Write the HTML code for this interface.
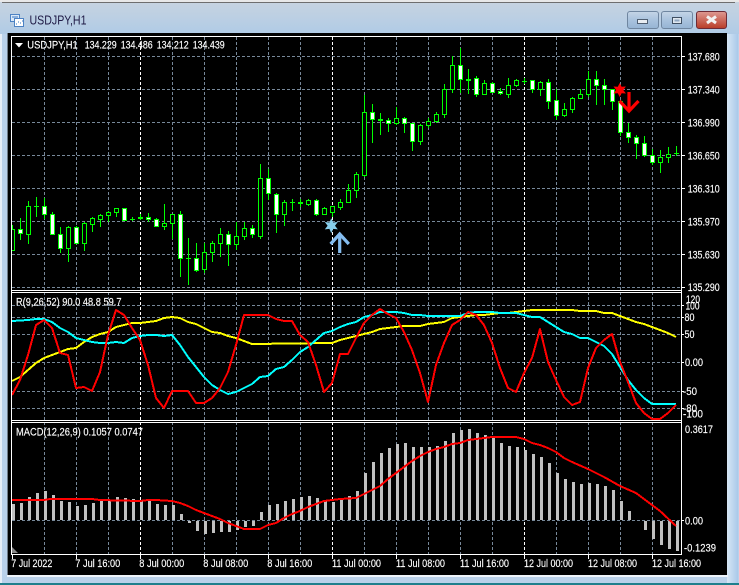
<!DOCTYPE html>
<html><head><meta charset="utf-8"><title>USDJPY,H1</title>
<style>
html,body{margin:0;padding:0;background:#b9d1ea;width:739px;height:585px;overflow:hidden}
svg{display:block}
text{font-family:"Liberation Sans",sans-serif;font-size:11px;fill:#fff;stroke:#fff;stroke-width:.15px}
.c{shape-rendering:crispEdges}
</style></head><body>
<svg width="739" height="585" viewBox="0 0 739 585" xmlns="http://www.w3.org/2000/svg">
<defs>
<linearGradient id="tb" x1="0" y1="0" x2="0" y2="1"><stop offset="0" stop-color="#c8d4e0"/><stop offset="1" stop-color="#b0cbe6"/></linearGradient>
<linearGradient id="bt" x1="0" y1="0" x2="0" y2="1"><stop offset="0" stop-color="#c5d5e6"/><stop offset=".5" stop-color="#a9c3de"/><stop offset="1" stop-color="#96b4d4"/></linearGradient>
<linearGradient id="cl" x1="0" y1="0" x2="0" y2="1"><stop offset="0" stop-color="#dd9a92"/><stop offset=".5" stop-color="#cc6a5c"/><stop offset="1" stop-color="#b83c28"/></linearGradient>
<linearGradient id="rs" x1="0" y1="0" x2="1" y2="0"><stop offset="0" stop-color="#d7e6f5"/><stop offset="1" stop-color="#a9c9e9"/></linearGradient>
</defs>
<!-- window frame -->
<rect width="739" height="585" fill="#b9d1ea"/>
<rect x="0" y="0" width="739" height="34" fill="url(#tb)"/>
<rect x="0" y="0" width="739" height="2" fill="#e8e8e8"/>
<rect x="2" y="2" width="733" height="1" fill="#6e6e6e" class="c"/>
<rect x="727" y="34" width="11" height="550" fill="url(#rs)"/>
<rect x="0" y="34" width="2" height="550" fill="#e6eef7"/>
<rect x="7" y="33" width="1" height="543" fill="#6f7b88" class="c"/>
<rect x="7" y="575" width="721" height="2" fill="#eef4fa" class="c"/>
<rect x="0" y="583" width="739" height="2" fill="#1f7f8c" class="c"/>
<!-- title -->
<g class="c">
<rect x="10.5" y="14.5" width="9" height="7" fill="#dbe9f8" stroke="#4d83c4"/>
<rect x="14.5" y="18.5" width="9" height="8" fill="#fff" stroke="#4d83c4"/>
<path d="M12 17h6M16 24h1M18 22h1M20 23h1M22 21h1" stroke="#3a78c2" fill="none"/>
</g>
<text x="29.5" y="24.5" textLength="57" lengthAdjust="spacingAndGlyphs" style="font-size:12.5px;fill:#1e1a45;stroke:none">USDJPY,H1</text>
<!-- buttons -->
<rect x="627.5" y="11.5" width="31" height="17" rx="2.5" fill="url(#bt)" stroke="#6f86a0"/>
<rect x="637.5" y="19.5" width="10" height="4" fill="#e8edf2" stroke="#4f5f72" class="c"/>
<rect x="661.5" y="11.5" width="31" height="17" rx="2.5" fill="url(#bt)" stroke="#6f86a0"/>
<rect x="672.5" y="17.5" width="9" height="6" fill="#dfe7ef" stroke="#3f4f62" stroke-width="1" class="c"/>
<rect x="674.5" y="19.5" width="5" height="2" fill="#8ea6c0" class="c"/>
<rect x="696.5" y="11.5" width="30" height="17" rx="2.5" fill="url(#cl)" stroke="#6d2a35"/>
<path d="M707 16.5l9 6.5M716 16.5l-9 6.5" stroke="#f2f2f2" stroke-width="3" fill="none"/>
<!-- chart bg -->
<rect x="8" y="33" width="719" height="542" fill="#000" class="c"/>

<!-- grid -->
<g class="c" fill="none" stroke="#778899" stroke-dasharray="3 2">
<path d="M12 56.5H681M12 89.5H681M12 122.5H681M12 155.5H681M12 188.5H681M12 221.5H681M12 254.5H681M12 287.5H681"/>
<path d="M12 305.5H681M12 317.5H681M12 334.5H681M12 362.5H681M12 391.5H681M12 408.5H681M12 520.5H681"/>
<path d="M44.5 37V554M76.5 37V554M108.5 37V554M172.5 37V554M204.5 37V554M236.5 37V554M268.5 37V554M300.5 37V554M364.5 37V554M396.5 37V554M428.5 37V554M460.5 37V554M492.5 37V554M556.5 37V554M588.5 37V554M620.5 37V554M652.5 37V554"/>
</g>
<path class="c" d="M140.5 37V554M332.5 37V554M524.5 37V554" fill="none" stroke="#fff" stroke-dasharray="3 2"/>

<!-- MACD histogram -->
<path class="c" fill="none" stroke="#c0c0c0" stroke-width="3" d="M13.5 520V504M21.5 520V503M29.5 520V497M37.5 520V493M45.5 520V491M53.5 520V495M61.5 520V501M69.5 520V502M77.5 520V506M85.5 520V505M93.5 520V503M101.5 520V501M109.5 520V500M117.5 520V497M125.5 520V498M133.5 520V499M141.5 520V501M149.5 520V501M157.5 520V504M165.5 520V505M173.5 520V505M181.5 520V514M189.5 521V523M197.5 521V531M205.5 521V534M213.5 521V533M221.5 521V532M229.5 521V532M237.5 521V530M245.5 521V527M253.5 521V526M261.5 520V512M269.5 520V505M277.5 520V504M285.5 520V501M293.5 520V499M301.5 520V497M309.5 520V496M317.5 520V498M325.5 520V500M333.5 520V502M341.5 520V500M349.5 520V496M357.5 520V491M365.5 520V473M373.5 520V462M381.5 520V453M389.5 520V448M397.5 520V444M405.5 520V443M413.5 520V447M421.5 520V447M429.5 520V447M437.5 520V446M445.5 520V441M453.5 520V433M461.5 520V430M469.5 520V429M477.5 520V433M485.5 520V435M493.5 520V437M501.5 520V443M509.5 520V446M517.5 520V447M525.5 520V450M533.5 520V454M541.5 520V457M549.5 520V463M557.5 520V473M565.5 520V479M573.5 520V482M581.5 520V484M589.5 520V483M597.5 520V484M605.5 520V486M613.5 520V490M621.5 520V501M629.5 520V511M645.5 521V530M653.5 521V539M661.5 521V545M669.5 521V549M677.5 521V551"/>
<path d="M12 553V547L18 553Z" fill="#8a8a8a"/>

<!-- candles -->
<g class="c">
<path fill="none" stroke="#00ff00" d="M12.5 225V250M20.5 218V240M28.5 201V244M36.5 197V217M44.5 198V219M52.5 212V234M60.5 227V253M68.5 226V262M76.5 226V244M84.5 222V251M92.5 217V232M100.5 214V227M108.5 211V222M116.5 208V217M124.5 208V221M132.5 217V221M140.5 214V220M148.5 213V222M156.5 218V227M164.5 204V230M172.5 214V239M180.5 211V277M188.5 238V285M196.5 243V272M204.5 243V273M212.5 241V262M220.5 228V257M228.5 231V266M236.5 222V250M244.5 222V240M252.5 225V238M260.5 164V239M268.5 169V200M276.5 193V233M284.5 200V226M292.5 199V211M300.5 199V207M308.5 199V206M316.5 199V216M324.5 207V214M332.5 206V217M340.5 199V210M348.5 184V203M356.5 172V198M364.5 95V177M372.5 104V143M380.5 113V135M388.5 118V132M396.5 107V125M404.5 117V133M412.5 123V151M420.5 124V145M428.5 118V128M436.5 112V123M444.5 84V118M452.5 56V93M460.5 48V93M468.5 69V94M476.5 76V97M484.5 80V95M492.5 82V93M500.5 88V95M508.5 78V98M516.5 79V87M524.5 78V84M532.5 80V93M540.5 81V96M548.5 79V109M556.5 89V120M564.5 103V117M572.5 97V113M580.5 89V99M588.5 71V97M596.5 71V105M604.5 79V105M612.5 89V110M620.5 100V136M628.5 123V143M636.5 135V159M644.5 136V157M652.5 149V165M660.5 150V173M668.5 147V163M676.5 146V156"/>
<path fill="none" stroke="#00ff00" d="M34 206.5h5M130 219.5h5M138 218.5h5M138 217.5h5M186 258.5h5M290 202.5h5M298 203.5h5M298 202.5h5M378 120.5h5M378 119.5h5M466 80.5h5M466 79.5h5M522 81.5h5M674 153.5h5"/>
<path fill="#000" stroke="#00ff00" d="M12 229.5h2.5v21H12M26.5 206.5h4v28h-4zM66.5 227.5h4v21h-4zM82.5 223.5h4v20h-4zM90.5 218.5h4v6h-4zM98.5 215.5h4v4h-4zM106.5 212.5h4v3h-4zM114.5 208.5h4v4h-4zM162.5 223.5h4v3h-4zM170.5 214.5h4v9h-4zM202.5 252.5h4v17h-4zM210.5 243.5h4v9h-4zM218.5 234.5h4v9h-4zM234.5 236.5h4v8h-4zM242.5 228.5h4v8h-4zM258.5 178.5h4v58h-4zM282.5 202.5h4v12h-4zM306.5 200.5h4v4h-4zM322.5 208.5h4v6h-4zM330.5 206.5h4v6h-4zM338.5 202.5h4v5h-4zM346.5 190.5h4v12h-4zM354.5 174.5h4v16h-4zM362.5 112.5h4v63h-4zM394.5 118.5h4v5h-4zM418.5 125.5h4v16h-4zM426.5 121.5h4v4h-4zM434.5 114.5h4v7h-4zM442.5 89.5h4v25h-4zM450.5 65.5h4v24h-4zM482.5 83.5h4v11h-4zM506.5 85.5h4v9h-4zM514.5 80.5h4v5h-4zM538.5 82.5h4v7h-4zM562.5 109.5h4v6h-4zM570.5 98.5h4v11h-4zM578.5 94.5h4v4h-4zM586.5 79.5h4v15h-4zM658.5 157.5h4v5h-4zM666.5 154.5h4v3h-4z"/>
<path fill="#fff" stroke="#00ff00" d="M18.5 229.5h4v4h-4zM42.5 206.5h4v8h-4zM50.5 214.5h4v20h-4zM58.5 234.5h4v14h-4zM74.5 227.5h4v16h-4zM122.5 208.5h4v12h-4zM146.5 217.5h4v2h-4zM154.5 219.5h4v7h-4zM178.5 214.5h4v44h-4zM194.5 258.5h4v12h-4zM226.5 234.5h4v10h-4zM250.5 228.5h4v6h-4zM266.5 178.5h4v15h-4zM274.5 194.5h4v20h-4zM314.5 200.5h4v14h-4zM370.5 112.5h4v7h-4zM386.5 120.5h4v3h-4zM402.5 118.5h4v5h-4zM410.5 123.5h4v18h-4zM458.5 65.5h4v14h-4zM474.5 78.5h4v16h-4zM490.5 83.5h4v9h-4zM498.5 91.5h4v2h-4zM530.5 80.5h4v9h-4zM546.5 82.5h4v19h-4zM554.5 100.5h4v15h-4zM594.5 79.5h4v6h-4zM602.5 85.5h4v4h-4zM610.5 89.5h4v12h-4zM618.5 101.5h4v31h-4zM626.5 132.5h4v5h-4zM634.5 137.5h4v6h-4zM642.5 143.5h4v12h-4zM650.5 155.5h4v7h-4z"/>
</g>

<!-- RSI-style lines -->
<g fill="none" stroke-width="2" class="c" stroke-linejoin="round">
<polyline stroke="#ffff00" points="12,381 20,377 28,370 36,363 44,358 52,355 60,352 68,349 76,348 84,342 92,337 100,334 108,332 116,327 124,325 132,323 140,323 148,322 156,321 164,318 172,317 180,318 188,322 196,324 204,328 212,332 220,333 228,336 236,338 244,341 252,344 332,343 340,340 348,338 356,336 364,334 372,332 380,329 388,328 396,327 404,326 420,326 428,324 436,323 444,322 452,318 460,317 468,316 476,315 484,315 492,314 500,313 508,313 516,312 524,311 532,310 572,310 580,311 596,311 604,313 612,313 620,316 628,319 636,322 644,324 652,327 660,330 668,333 676,337"/>
<polyline stroke="#00ffff" points="12,321 28,320 36,319 44,319 52,322 60,328 68,332 76,338 84,340 92,342 100,343 108,343 116,342 124,343 132,338 140,336 148,335 156,335 164,336 172,335 180,345 188,357 196,367 204,377 212,385 220,390 228,394 236,392 244,388 252,384 260,377 268,376 276,369 284,367 292,360 300,352 308,347 316,340 324,333 332,331 340,327 348,324 356,322 364,317 372,315 380,312 388,312 396,312 404,313 412,315 420,315 428,316 460,316 468,313 476,312 492,312 500,313 516,313 524,315 532,317 540,317 548,322 556,327 564,332 572,334 580,338 588,338 596,342 604,346 612,354 620,367 628,380 636,390 644,398 652,404 676,404"/>
<polyline stroke="#ff0000" points="12,395 20,380 28,355 36,325 44,320 52,328 60,353 68,355 76,388 84,387 92,391 100,372 108,335 116,310 124,315 132,328 140,340 148,365 156,398 164,408 172,391 188,391 196,403 204,403 212,398 220,388 228,372 236,345 244,315 268,315 276,319 284,321 292,321 300,335 308,342 316,365 324,392 332,383 340,354 348,354 356,338 364,323 372,315 380,309 388,314 396,318 404,332 412,350 420,373 428,402 436,365 444,343 452,325 460,320 468,312 476,315 484,325 492,343 500,368 508,388 516,392 524,373 532,358 540,329 548,362 556,380 564,397 572,405 580,402 588,368 596,348 604,340 612,334 620,362 628,382 636,403 644,413 652,419 660,419 668,413 676,405"/>
<polyline stroke="#ff0000" points="12,500 44,500 50,499 92,499 100,500 140,501 148,500 156,500 172,501 180,503 188,506 196,510 204,513 212,516 220,519 228,523 236,526 244,529 260,529 268,525 276,523 284,518 292,514 300,511 308,507 316,504 324,501 332,500 340,499 356,498 364,494 372,490 380,486 388,479 396,473 404,467 412,461 420,456 428,452 436,449 444,447 452,444 460,443 468,440 476,439 484,438 492,437 516,437 524,439 532,443 540,445 548,448 556,452 564,458 572,462 588,469 604,477 620,486 636,493 644,499 660,511 676,526"/>
</g>

<!-- markers -->
<polygon transform="translate(331.3 225.7)" fill="#87ceeb" points="0,-7.5 1.9,-3.2 6.5,-3.7 3.7,0 6.5,3.7 1.9,3.2 0,7.5 -1.9,3.2 -6.5,3.7 -3.7,0 -6.5,-3.7 -1.9,-3.2"/>
<path d="M339.7 253V234.5M330.6 244l9.1-10 9.1 10" fill="none" stroke="#84bdf0" stroke-width="3.2"/>
<polygon transform="translate(619.7 90)" fill="#ff0000" points="0,-7 1.9,-3.2 6.2,-3.5 3.6,0 6.2,3.5 1.9,3.2 0,7 -1.9,3.2 -6.2,3.5 -3.6,0 -6.2,-3.5 -1.9,-3.2"/>
<path d="M629 92V111M619.5 101l9.5 10 9.5-10" fill="none" stroke="#ff0000" stroke-width="3.2"/>

<!-- frames -->
<g class="c" fill="none" stroke="#fff">
<path d="M11.5 36.5H681.5V554.5H11.5Z"/>
<path d="M12 290.5H682M12 292.5H682M12 420.5H682M12 422.5H682"/>
<path d="M12.5 555V559M76.5 555V559M140.5 555V559M204.5 555V559M268.5 555V559M332.5 555V559M396.5 555V559M460.5 555V559M524.5 555V559M588.5 555V559M652.5 555V559"/>
<path d="M682 56.5h3M682 89.5h3M682 122.5h3M682 155.5h3M682 188.5h3M682 221.5h3M682 254.5h3M682 287.5h3M682 305.5h2M682 317.5h2M682 334.5h2M682 362.5h2M682 391.5h2M682 408.5h2M682 520.5h2"/>
</g>

<!-- header -->
<path d="M15 43h8l-4 4.5z" fill="#fff"/>
<text x="27.3" y="48.5" textLength="50.5" lengthAdjust="spacingAndGlyphs">USDJPY,H1</text>
<text x="84.7" y="48.5" textLength="32" lengthAdjust="spacingAndGlyphs">134.229</text>
<text x="120.7" y="48.5" textLength="32" lengthAdjust="spacingAndGlyphs">134.486</text>
<text x="156.7" y="48.5" textLength="32" lengthAdjust="spacingAndGlyphs">134.212</text>
<text x="192.7" y="48.5" textLength="32" lengthAdjust="spacingAndGlyphs">134.439</text>
<text x="16" y="305.5" textLength="105.5" lengthAdjust="spacingAndGlyphs">R(9,26,52) 90.0 48.8 59.7</text>
<text x="16" y="435.5" textLength="127" lengthAdjust="spacingAndGlyphs">MACD(12,26,9) 0.1057 0.0747</text>

<!-- price scale -->
<text x="687.7" y="60.5" textLength="32" lengthAdjust="spacingAndGlyphs">137.680</text>
<text x="687.7" y="93.5" textLength="32" lengthAdjust="spacingAndGlyphs">137.340</text>
<text x="687.7" y="126.5" textLength="32" lengthAdjust="spacingAndGlyphs">136.990</text>
<text x="687.7" y="159.5" textLength="32" lengthAdjust="spacingAndGlyphs">136.650</text>
<text x="687.7" y="192.5" textLength="32" lengthAdjust="spacingAndGlyphs">136.310</text>
<text x="687.7" y="225.5" textLength="32" lengthAdjust="spacingAndGlyphs">135.970</text>
<text x="687.7" y="258.5" textLength="32" lengthAdjust="spacingAndGlyphs">135.630</text>
<text x="687.7" y="291" textLength="32" lengthAdjust="spacingAndGlyphs">135.290</text>
<text x="686" y="303" textLength="14" lengthAdjust="spacingAndGlyphs">120</text>
<text x="685.5" y="309.5" textLength="14" lengthAdjust="spacingAndGlyphs">100</text>
<text x="684.5" y="321" textLength="10" lengthAdjust="spacingAndGlyphs">80</text>
<text x="684.5" y="338" textLength="10" lengthAdjust="spacingAndGlyphs">50</text>
<text x="685" y="366" textLength="18" lengthAdjust="spacingAndGlyphs">0.00</text>
<text x="683" y="395" textLength="14" lengthAdjust="spacingAndGlyphs">-50</text>
<text x="683" y="412" textLength="14" lengthAdjust="spacingAndGlyphs">-80</text>
<text x="683" y="417.5" textLength="20" lengthAdjust="spacingAndGlyphs">-100</text>
<text x="685" y="433" textLength="28" lengthAdjust="spacingAndGlyphs">0.3617</text>
<text x="685" y="524.5" textLength="18" lengthAdjust="spacingAndGlyphs">0.00</text>
<text x="684" y="551.5" textLength="32" lengthAdjust="spacingAndGlyphs">-0.1239</text>

<!-- time scale -->
<text x="11.3" y="567" textLength="41" lengthAdjust="spacingAndGlyphs">7 Jul 2022</text>
<text x="75.3" y="567" textLength="45" lengthAdjust="spacingAndGlyphs">7 Jul 16:00</text>
<text x="139.3" y="567" textLength="45" lengthAdjust="spacingAndGlyphs">8 Jul 00:00</text>
<text x="203.3" y="567" textLength="45" lengthAdjust="spacingAndGlyphs">8 Jul 08:00</text>
<text x="267.3" y="567" textLength="45" lengthAdjust="spacingAndGlyphs">8 Jul 16:00</text>
<text x="332" y="567" textLength="49" lengthAdjust="spacingAndGlyphs">11 Jul 00:00</text>
<text x="396" y="567" textLength="49" lengthAdjust="spacingAndGlyphs">11 Jul 08:00</text>
<text x="460" y="567" textLength="49" lengthAdjust="spacingAndGlyphs">11 Jul 16:00</text>
<text x="524" y="567" textLength="49" lengthAdjust="spacingAndGlyphs">12 Jul 00:00</text>
<text x="588" y="567" textLength="49" lengthAdjust="spacingAndGlyphs">12 Jul 08:00</text>
<text x="652" y="567" textLength="49" lengthAdjust="spacingAndGlyphs">12 Jul 16:00</text>
</svg>
</body></html>
